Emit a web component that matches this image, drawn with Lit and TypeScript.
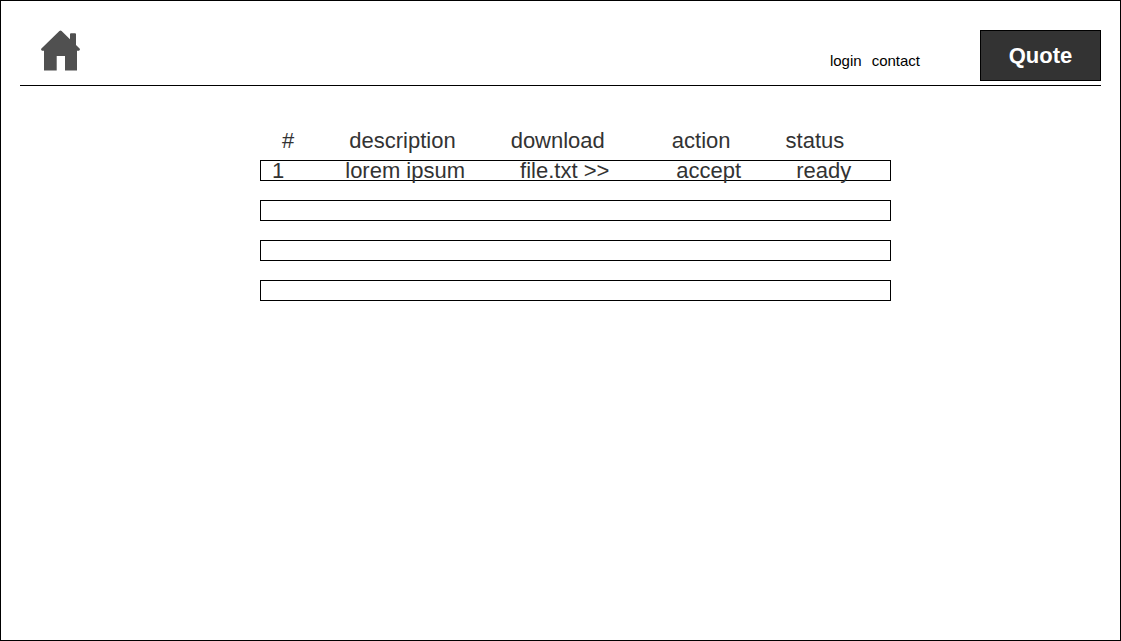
import { LitElement, html, css } from "lit";
import { customElement, state } from "lit/decorators.js";

interface Quote {
  id: string;
  description: string;
  file: string;
  action: string;
  status: string;
}

@customElement("site-header")
class SiteHeader extends LitElement {
  static styles = css`
    :host {
      display: block;
    }
    .bar {
      display: flex;
      align-items: flex-start;
      margin: 0 19px;
      padding: 29px 0 4px;
      border-bottom: 1px solid #000;
    }
    .home {
      display: block;
      margin-left: 20px;
    }
    .icon {
      display: block;
      width: 41px;
      height: 41px;
      fill: #505050;
    }
    .links {
      display: flex;
      gap: 10px;
      margin: 22px 60px 0 auto;
    }
    .link {
      color: #000;
      font-size: 15px;
      line-height: 18px;
      text-decoration: none;
    }
    .quote {
      box-sizing: border-box;
      width: 121px;
      height: 51px;
      padding: 0;
      border: 1px solid #000;
      border-radius: 0;
      background: #333;
      color: #fff;
      font-family: inherit;
      font-size: 22px;
      font-weight: bold;
      line-height: 26px;
      cursor: pointer;
    }
  `;

  render() {
    return html`
      <header class="bar">
        <a class="home" href="#" aria-label="Home">
          <svg class="icon" viewBox="0 0 41 41" aria-hidden="true">
            <path
              d="M19.4 1 Q20.5 0.2 21.6 1 L30 9.2 V4.2 Q30 3.2 31 3.2 H35 Q36 3.2 36 4.2 V15 L39.8 18.8 Q40.5 20.5 38.8 20.8 H37 V40.5 H25 V26 H16.7 V40.5 H4 V20.8 H2.2 Q0.5 20.5 1.2 18.8 Z"
            />
          </svg>
        </a>
        <nav class="links">
          <a class="link" href="#login">login</a>
          <a class="link" href="#contact">contact</a>
        </nav>
        <button class="quote" type="button">Quote</button>
      </header>
    `;
  }
}

@customElement("quote-list")
class QuoteList extends LitElement {
  static styles = css`
    :host {
      display: block;
    }
    .table,
    .group {
      display: block;
    }
    .row {
      display: flex;
      align-items: center;
      box-sizing: border-box;
      white-space: nowrap;
    }
    .head {
      padding-left: 22px;
      margin-bottom: 6px;
    }
    .items {
      display: grid;
      gap: 19px;
    }
    .item {
      height: 21px;
      border: 1px solid #000;
      padding-left: 11px;
    }
    .cell {
      padding: 0;
      color: #333;
      font-size: 22px;
      font-weight: normal;
      line-height: 26px;
      text-align: left;
    }
    .description,
    .download,
    .status {
      padding-left: 55px;
    }
    .item .description {
      padding-left: 61px;
    }
    .action {
      padding-left: 67px;
    }
  `;

  @state() private quotes: (Quote | null)[] = [
    { id: "1", description: "lorem ipsum", file: "file.txt >>", action: "accept", status: "ready" },
    null,
    null,
    null,
  ];

  render() {
    return html`
      <table class="table">
        <thead class="group">
          <tr class="row head">
            <th class="cell" scope="col">#</th>
            <th class="cell description" scope="col">description</th>
            <th class="cell download" scope="col">download</th>
            <th class="cell action" scope="col">action</th>
            <th class="cell status" scope="col">status</th>
          </tr>
        </thead>
        <tbody class="items">
          ${this.quotes.map(
            (q) => html`
              <tr class="row item">
                <td class="cell">${q?.id}</td>
                <td class="cell description">${q?.description}</td>
                <td class="cell download">${q?.file}</td>
                <td class="cell action">${q?.action}</td>
                <td class="cell status">${q?.status}</td>
              </tr>
            `
          )}
        </tbody>
      </table>
    `;
  }
}

@customElement("app-root")
class AppRoot extends LitElement {
  static styles = css`
    :host {
      display: block;
      box-sizing: border-box;
      min-height: 100vh;
      border: 1px solid #000;
      background: #fff;
      font-family: "Liberation Sans", Arial, sans-serif;
    }
    .content {
      padding: 42px 229px 40px 259px;
    }
  `;

  render() {
    return html`
      <site-header></site-header>
      <main class="content">
        <quote-list></quote-list>
      </main>
    `;
  }
}
